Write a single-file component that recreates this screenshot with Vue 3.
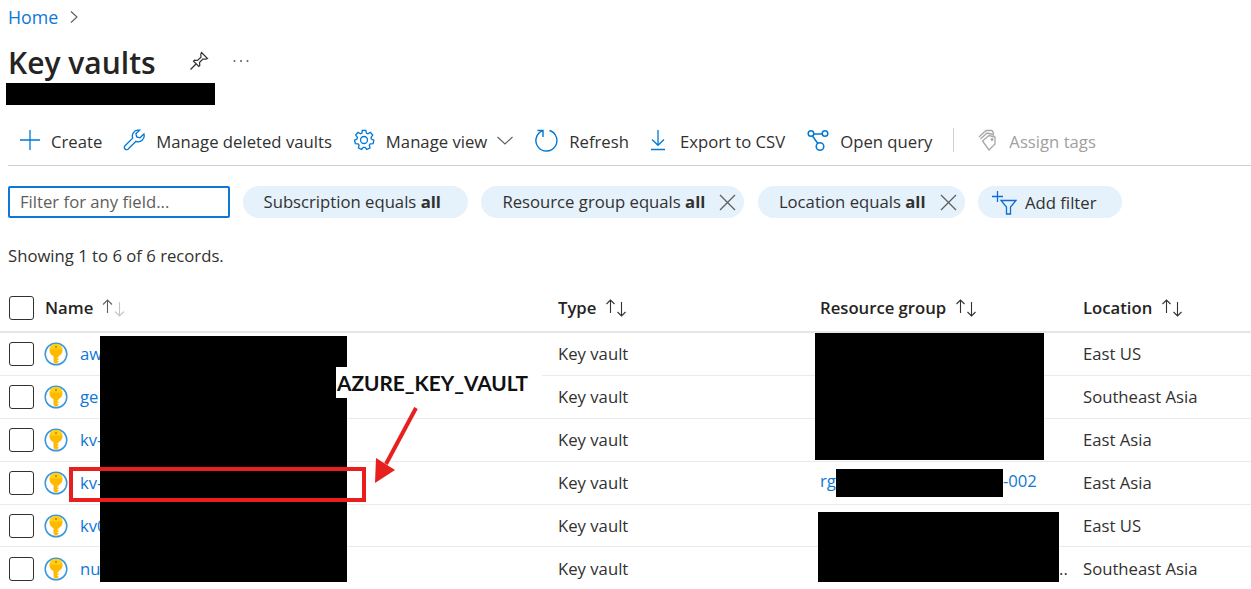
<script setup>
const toolbar = [
  { label: 'Create', icon: 'plus' },
  { label: 'Manage deleted vaults', icon: 'wrench' },
  { label: 'Manage view', icon: 'gear', chevron: true },
  { label: 'Refresh', icon: 'refresh' },
  { label: 'Export to CSV', icon: 'download' },
  { label: 'Open query', icon: 'share' },
]

const filters = [
  { label: 'Subscription equals ', closable: false },
  { label: 'Resource group equals ', closable: true },
  { label: 'Location equals ', closable: true },
]

const columns = [
  { label: 'Type' },
  { label: 'Resource group' },
  { label: 'Location' },
]

const rows = [
  { name: 'aw', location: 'East US' },
  { name: 'ge', location: 'Southeast Asia' },
  { name: 'kv-', location: 'East Asia' },
  { name: 'kv-', location: 'East Asia', group: true },
  { name: 'kv0', location: 'East US' },
  { name: 'nu', location: 'Southeast Asia', dots: true },
]
</script>

<template>
  <div class="page">
    <nav class="crumbs">
      <a>Home</a>
      <svg width="10" height="14" viewBox="0 0 10 14"><path d="M2 1.500 8 7l-6 5.500" fill="none" stroke="#605e5c" stroke-width="1.100" /></svg>
    </nav>

    <header class="title-row">
      <h1>Key vaults</h1>
      <svg class="pin" width="20" height="20" viewBox="0 0 20 20" fill="none" stroke="#323130" stroke-width="1.200">
        <path d="M12.500 1.500 18.500 7.500 16.800 8.200 13.800 8 10.500 11.500 10.800 14.500 9.800 15.500 4.500 10.200 5.500 9.200 8.500 9.500 12 6.200 11.800 3.200Z" />
        <path d="M7 13 1.500 18.500" />
      </svg>
      <svg class="more" width="16" height="4" viewBox="0 0 16 4" fill="#605e5c">
        <circle cx="1.500" cy="2" r="1" /><circle cx="8" cy="2" r="1" /><circle cx="14.500" cy="2" r="1" />
      </svg>
    </header>

    <div class="toolbar">
      <button v-for="item in toolbar" :key="item.label" class="tool" :class="item.icon">
        <svg v-if="item.icon === 'plus'" width="20" height="20" viewBox="0 0 20 20" stroke="#0078d4" stroke-width="1.300"><path d="M10 0v20M0 10h20" /></svg>
        <svg v-else-if="item.icon === 'wrench'" width="22" height="22" viewBox="0 0 22 22" fill="none" stroke="#0078d4" stroke-width="1.300">
          <path d="M14.500 1.200a6 6 0 0 0-4.800 8L1.800 17a2.300 2.300 0 0 0 3.200 3.200l7.900-7.900a6 6 0 0 0 8-7.300l-3.900 3.800-3.300-.9-.8-3.200 3.700-3.600a6 6 0 0 0-1.300.1Z" />
        </svg>
        <svg v-else-if="item.icon === 'gear'" width="22" height="22" viewBox="0 0 22 22" fill="none" stroke="#0078d4" stroke-width="1.300">
          <circle cx="11" cy="11" r="3.500" />
          <path d="M9.200 1.300h3.600l.6 2.800 1.500.7 2.500-1.400 2.300 2.700-1.700 2.200.4 1.700 2.400 1.200-.7 3.500-2.800.2-1 1.300.7 2.700-3.200 1.600-1.700-2.200h-1.800l-1.700 2.200-3.200-1.600.7-2.700-1-1.300-2.800-.2-.7-3.500 2.400-1.200.4-1.700-1.700-2.200 2.300-2.700 2.500 1.400 1.500-.7Z" />
        </svg>
        <svg v-else-if="item.icon === 'refresh'" width="23" height="23" viewBox="0 0 23 23" fill="none" stroke="#0078d4" stroke-width="1.400">
          <path d="M14.500 1.500A10.500 10.500 0 1 1 8 1.600" />
          <path d="M2.500 1.500H8V8" />
        </svg>
        <svg v-else-if="item.icon === 'download'" width="16" height="22" viewBox="0 0 16 22" fill="none" stroke="#0078d4" stroke-width="1.300">
          <path d="M8 1v15M2 10.500 8 16.300l6-5.800M1 20.500h14" />
        </svg>
        <svg v-else-if="item.icon === 'share'" width="22" height="22" viewBox="0 0 22 22" fill="none" stroke="#0078d4" stroke-width="1.500">
          <circle cx="4" cy="4.500" r="2.800" />
          <circle cx="18" cy="4.500" r="2.800" />
          <circle cx="13" cy="17.500" r="3.800" />
          <path d="M6.800 5h8.400M5.500 7l5.300 7.500" />
        </svg>
        <span>{{ item.label }}</span>
        <svg v-if="item.chevron" class="chevron" width="16" height="9" viewBox="0 0 16 9" fill="none" stroke="#605e5c" stroke-width="1.100"><path d="M.5 1 8 8l7.500-7" /></svg>
      </button>
      <i class="divider"></i>
      <button class="tool disabled">
        <svg width="20" height="22" viewBox="0 0 20 22" fill="none" stroke="#a6a6a6" stroke-width="1.300">
          <path d="M4.500 12 11 6.500l6 1.500v7l-6 6Z" />
          <path d="M2.500 10 9 4l6.500 1.500M15.500 5.500V7" />
          <path d="M1 8 8 1.500h6l1.500 2.500V5" />
          <circle cx="14" cy="10.500" r=".8" />
        </svg>
        <span>Assign tags</span>
      </button>
    </div>

    <div class="filters">
      <input class="search" placeholder="Filter for any field..." />
      <div v-for="f in filters" :key="f.label" class="chip" :class="{ closable: f.closable }">
        <span>{{ f.label }}<b>all</b></span>
        <svg v-if="f.closable" width="17" height="17" viewBox="0 0 17 17" stroke="#605e5c" stroke-width="1.300"><path d="M1 1l15 15M16 1 1 16" /></svg>
      </div>
      <div class="chip add">
        <svg width="25" height="24" viewBox="0 0 25 24" fill="none" stroke="#0f6cd4" stroke-width="1.300">
          <path d="M5.500 0v11M0 5.500h11" />
          <path d="M9 9.500h15l-5.500 6.500v7h-4v-7Z" />
        </svg>
        <span>Add filter</span>
      </div>
    </div>

    <p class="count">Showing 1 to 6 of 6 records.</p>

    <div class="table">
      <div class="row head">
        <div class="name-cell">
          <span class="check"></span>
          <span class="head-label">Name</span>
          <svg class="sort" width="24" height="20" viewBox="0 0 24 20" fill="none" stroke-width="1.100">
            <path d="M5.500 15V2M1 6.500l4.500-4.500L10 6.500" stroke="#605e5c" />
            <path d="M17.500 4v14M13 13.500l4.500 4.500 4.500-4.500" stroke="#c8c6c4" />
          </svg>
        </div>
        <div v-for="col in columns" :key="col.label" class="head-cell">
          <span class="head-label">{{ col.label }}</span>
          <svg class="sort" width="24" height="20" viewBox="0 0 24 20" fill="none" stroke="#323130" stroke-width="1.100">
            <path d="M5.500 15V2M1.500 6l4-4 4 4" />
            <path d="M16.500 4v14M12.500 14l4 4 4-4" />
          </svg>
        </div>
      </div>

      <div v-for="(row, i) in rows" :key="i" class="row">
        <div class="name-cell">
          <span class="check"></span>
          <svg class="key" width="24" height="24" viewBox="0 0 24 24">
            <circle cx="12" cy="12" r="10.800" fill="#fff" stroke="#3a96dd" stroke-width="1.500" />
            <path d="M9.500 12h5v8l-2.500 2-2.500-2Z" fill="#ffb900" />
            <circle cx="12" cy="8.200" r="6.500" fill="#ffb900" />
            <path d="M5.600 7.400a6.500 6.500 0 0 1 12.800 0Z" fill="#fcd116" />
            <circle cx="12" cy="5" r="1.200" fill="#e8890c" />
            <path d="M13.200 15.500h1.500v1h-1.500zM13.200 18h1.500v1h-1.500z" fill="#fff" />
          </svg>
          <a class="link">{{ row.name }}</a>
        </div>
        <div>Key vault</div>
        <div class="group-cell">
          <a v-if="row.group" class="link">rg<i class="inline-redact"></i>-002</a>
          <span v-if="row.dots" class="dots">..</span>
        </div>
        <div>{{ row.location }}</div>
      </div>
    </div>

    <!-- redactions and annotation painted on top of the screenshot -->
    <i class="redact r-sub"></i>
    <i class="redact r-name"></i>
    <i class="redact r-rg1"></i>
    <i class="redact r-rg2"></i>
    <div class="note">AZURE_KEY_VAULT</div>
    <div class="highlight"></div>
    <svg class="arrow" width="60" height="95" viewBox="0 0 60 95">
      <path d="M48 1 18 57" stroke="#e81f1f" stroke-width="4" fill="none" />
      <path d="M7 76 8 51 27 63Z" fill="#e81f1f" />
    </svg>
  </div>
</template>

<style>
html,
body {
  margin: 0;
  background: #fff;
}
</style>

<style scoped>
.page {
  position: relative;
  height: 589px;
  overflow: hidden;
  font-family: "Open Sans", "Noto Sans", sans-serif;
  font-size: 16.7px;
  color: #323130;
  background: #fff;
}

.crumbs {
  display: flex;
  align-items: center;
  gap: 11px;
  height: 34px;
  padding-left: 8px;
  font-size: 17.8px;
  color: #0f78d4;
}

.title-row {
  display: flex;
  align-items: center;
  height: 50px;
  margin-top: 3px;
  padding-left: 8px;
}

.title-row h1 {
  margin: 0;
  font-size: 30px;
  font-weight: 600;
  color: #252423;
}

.pin {
  margin-left: 33px;
  position: relative;
  top: -1px;
}

.more {
  margin-left: 24px;
  position: relative;
  top: -1px;
}

.toolbar {
  display: flex;
  align-items: center;
  gap: 21px;
  height: 50px;
  margin: 28px 0 0 8px;
  padding-left: 12px;
  border-bottom: 1px solid #d2d0ce;
  box-sizing: content-box;
}

.tool {
  display: flex;
  align-items: center;
  gap: 11px;
  height: 50px;
  padding: 0;
  border: 0;
  background: none;
  font: inherit;
  color: inherit;
}

.tool span {
  position: relative;
  top: 1px;
}

.tool.refresh {
  margin-left: 1px;
}

.tool.download {
  gap: 14px;
}

.tool.share {
  margin-left: 1px;
}

.tool.disabled {
  margin-left: 3px;
  color: #a19f9d;
}

.chevron {
  margin-left: -1px;
}

.divider {
  width: 1px;
  height: 24px;
  background: #d2d0ce;
}

.filters {
  display: flex;
  align-items: center;
  gap: 13.500px;
  height: 32px;
  margin: 20px 0 0 8px;
}

.search {
  box-sizing: border-box;
  width: 222px;
  height: 32px;
  margin-right: -1px;
  padding: 0 10px 2px;
  border: 2px solid #0f78d4;
  border-radius: 2px;
  outline: none;
  font: inherit;
  color: #605e5c;
}

.search::placeholder {
  color: #605e5c;
  opacity: 1;
}

.chip {
  display: flex;
  align-items: center;
  gap: 14px;
  height: 32px;
  padding: 0 27px 2px 21px;
  box-sizing: border-box;
  border-radius: 16px;
  background: #e5f1fb;
  white-space: pre;
}

.chip.closable {
  padding-right: 8px;
}

.chip svg {
  position: relative;
  top: 1px;
}

.chip.add {
  gap: 8px;
  padding: 0 25px 0 14px;
}

.chip b {
  font-weight: 700;
}

.count {
  margin: 26px 0 0 8px;
  line-height: 24px;
}

.table {
  margin-top: 16px;
}

.row {
  display: grid;
  grid-template-columns: 549px 262px 263px 1fr;
  align-items: center;
  box-sizing: border-box;
  height: 42.9px;
  padding-left: 9px;
  border-bottom: 1px solid #edebe9;
  color: #323130;
}

.row:last-child {
  border-bottom: 0;
}

.row.head {
  height: 49px;
  border-bottom: 2px solid #e6e6e6;
}

.name-cell,
.head-cell {
  display: flex;
  align-items: center;
}

.head-label {
  font-weight: 600;
  color: #252423;
}

.sort {
  margin-left: 9px;
}

.check {
  box-sizing: border-box;
  width: 25px;
  height: 24px;
  margin-right: 10px;
  border: 1px solid #323130;
  border-radius: 3px;
}

.head .check {
  margin-right: 11px;
}

.key {
  margin-right: 12px;
}

.link {
  color: #0f78d4;
}

.group-cell {
  position: relative;
}

.inline-redact {
  display: inline-block;
  width: 167px;
  height: 28px;
  vertical-align: middle;
  background: #000;
}

.dots {
  position: absolute;
  left: 239px;
  top: -12px;
}

.redact {
  position: absolute;
  background: #000;
}

.r-sub {
  left: 6px;
  top: 83px;
  width: 209px;
  height: 22px;
}

.r-name {
  left: 100px;
  top: 336px;
  width: 247px;
  height: 246px;
}

.r-rg1 {
  left: 815px;
  top: 333px;
  width: 229px;
  height: 127px;
}

.r-rg2 {
  left: 818px;
  top: 512px;
  width: 241px;
  height: 70px;
}

.note {
  position: absolute;
  left: 336px;
  top: 367px;
  box-sizing: border-box;
  width: 206px;
  height: 31px;
  padding-left: 1px;
  background: #fff;
  font-family: Lato, "Open Sans", sans-serif;
  font-size: 20.8px;
  font-weight: 700;
  line-height: 31px;
  color: #111;
}

.highlight {
  position: absolute;
  left: 69px;
  top: 467px;
  box-sizing: border-box;
  width: 297px;
  height: 35px;
  border: 4px solid #e81f1f;
}

.arrow {
  position: absolute;
  left: 368px;
  top: 407px;
}
</style>
